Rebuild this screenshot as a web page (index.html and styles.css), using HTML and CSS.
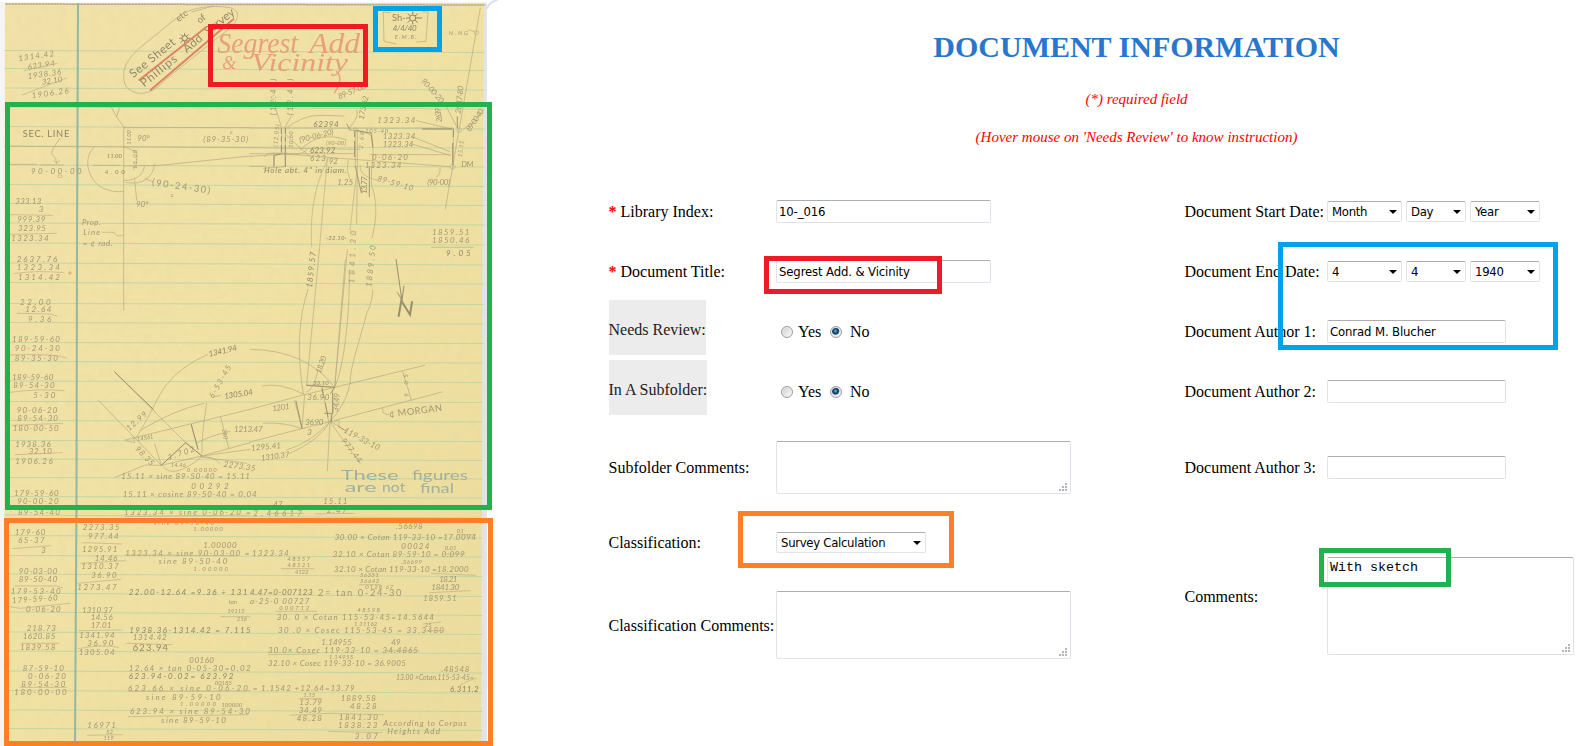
FILE: index.html
```html
<!DOCTYPE html>
<html lang="en">
<head>
<meta charset="utf-8">
<title>Document Information</title>
<link rel="stylesheet" href="styles.css">
</head>
<body>
<main class="page">
<section class="scan">
<svg class="sheet" viewBox="0 0 500 746" width="500" height="746">
<defs>
<linearGradient id="paper" x1="0" y1="0" x2="1" y2="1"><stop offset="0" stop-color="#f2e2a9"/><stop offset=".5" stop-color="#f1e2a4"/><stop offset="1" stop-color="#ecdd9f"/></linearGradient>
<filter id="grain" x="0" y="0" width="1" height="1"><feTurbulence type="fractalNoise" baseFrequency=".12" numOctaves="3" seed="4"/><feColorMatrix values="0 0 0 0 .6  0 0 0 0 .52  0 0 0 0 .25  0 0 0 .16 -.04"/></filter>
</defs>
<path d="M0 2H487V746H0Z" fill="#f5f5f4"/>
<path d="M482 3H487V746H480Z" fill="#e3e4e5"/>
<path d="M487 8Q490 2 497 0" class="edge"/>
<path d="M5 3H484L482 300L481 746H4Z" fill="url(#paper)"/>
<path d="M5 3H484L482 300L481 746H4Z" filter="url(#grain)"/>
<path d="M6 4L484 5" class="perf"/>
<path class="rule" d="M5 50.500L484 52.500M5 68.500L484 70.500M5 88L484 90M5 107L484 109M5 126.500L484 129M5 146L484 148M5 165L484 167M5 184.500L484 186.500M5 203.500L484 205.500M5 223L484 225M5 243L484 245M5 263L483 265M5 282.500L483 284M5 303.500L483 304.500M5 322.500L483 324M5 342.500L483 343.500M5 361.500L482 363M5 381L482 382.500M5 401.500L482 402.500M5 420.500L482 422M5 440.500L482 441.500M5 459L482 460.500M5 477.500L482 479M5 496.500L482 498M5 515L482 518M5 535.500L482 538M5 555.500L482 557M5 574L482 576.500M5 593L482 596.500M5 612L482 615.500M5 632L482 634.500M5 651L482 653.500M5 671L482 673M5 690.500L482 693M5 710L482 711.500M5 728.500L482 730.500"/>
<path class="margin" d="M78 4L77 250L76.500 500L75 746"/>

<g class="hand" transform="scale(.33333)">
<g transform="rotate(-8 110 180)"><text x="56" y="176" textLength="108">1314.42</text><text x="80" y="205" textLength="82">623.94</text><text x="76" y="233" textLength="102">1938.36</text><text x="116" y="256" textLength="62">32.10</text><text x="80" y="292" textLength="112">1906.26</text></g>
<path d="M72 212L172 190M66 285L200 234"/>
<g class="bold" transform="rotate(-39 400 235)"><text x="400" y="235" textLength="166" class="xl">See Sheet</text><text x="658" y="233" class="lg">of</text><text x="408" y="277" textLength="130" class="xl">Phillips</text><text x="572" y="277" textLength="64" class="xl">Add</text><text x="656" y="277" textLength="104" class="xl">Survey</text><text x="612" y="190" class="lg">etc</text></g>
<path class="sun" d="M554 100V107M554 123V130M539 115H546M562 115H570M543 104L549 110M559 120L565 127M565 104L559 110M549 120L543 127"/><circle class="sun" cx="554" cy="115" r="8"/>
<path class="dark" d="M374 250C362 205 384 174 424 140L532 52C575 18 640 16 684 22C730 30 712 65 690 84L495 240C460 280 420 290 390 270Q376 262 374 250M575 36L640 18"/>
<path class="redline" d="M418 240L618 82M452 270L700 58"/>
<text x="68" y="411" textLength="140" class="lg bold">SEC. LINE</text>
<path class="dark" d="M180 415Q146 460 158 466T170 490L162 482M170 490L178 482"/>
<path class="dark" d="M15 439L750 443M30 493H110M120 495H190M280 496H360M372 498L480 496L750 468M371 380V750M334 322Q350 355 371 380M350 350L358 324M371 383H750M282 442C250 470 260 530 300 560Q340 580 370 574M372 440L410 456Q415 490 400 510M372 542Q425 542 434 500M378 548Q455 558 464 492M404 540L410 600M435 536L458 545"/>
<text x="93" y="522" textLength="152">90-00-00</text><path d="M186 526Q172 522 174 530Q178 536 188 531"/>
<text x="320" y="474" textLength="46" class="sm bold">11.00</text><text x="314" y="523" textLength="60" class="sm bold">4.00</text>
<text transform="translate(394 434) rotate(-90)" textLength="44" class="sm">11.00</text><text transform="translate(412 507) rotate(-90)" textLength="58" class="sm">15.00</text>
<text x="412" y="422">90°</text><text x="408" y="620">90°</text>
<text x="455" y="556" textLength="176" transform="rotate(8 455 556)" class="lg">(90-24-30)</text><text x="512" y="590" class="sm">c</text>
<text x="610" y="426" textLength="134">(89-35-30)</text><text x="690" y="402" class="sm">c</text>
<text x="46" y="612" textLength="78">333.13</text><text x="116" y="636">3</text><text x="52" y="666" textLength="84">999.39</text><text x="54" y="692" textLength="84">323.95</text><text x="34" y="723" textLength="112">1323.34</text>
<path d="M30 644L158 646M30 703L170 700"/>
<text x="246" y="674" textLength="56">Prop.</text><text x="250" y="704" textLength="50">Line</text><text x="248" y="738" textLength="90">= ¢ rad.</text><path d="M308 697H342Q346 712 368 706"/>
</g>

<g class="hand" transform="translate(250 0) scale(.33333)">
<g class="script"><text x="-98" y="158" textLength="242" lengthAdjust="spacingAndGlyphs">Segrest</text><text x="178" y="158" textLength="152" lengthAdjust="spacingAndGlyphs">Add</text><text x="-84" y="206" class="amp">&amp;</text><text x="4" y="212" textLength="290" lengthAdjust="spacingAndGlyphs" class="vic">Vicinity</text><path d="M260 215Q282 235 254 278"/></g>
<text x="426" y="62" class="lg bold">Sh-</text><text x="428" y="94" textLength="72" class="bold">4/4/40</text><text x="434" y="116" textLength="66" class="sm">E.M.B.</text>
<path class="dark" d="M420 38L400 36L402 124L438 132M518 36H534L528 124L500 126"/>
<circle class="sun" cx="488" cy="54" r="9"/><path class="sun" d="M488 36V43M488 65V72M470 54H477M499 54H515M474 42L480 47M502 42L496 47M474 67L480 61M502 67L496 61"/><circle cx="679" cy="98" r="6"/>
<text x="596" y="106" textLength="58" class="sm">N.NG</text><path d="M655 90L674 95"/><path class="dark" d="M691 24L608 500L586 628"/>
<text transform="translate(78 346) rotate(-90)" textLength="110">(12.40)</text><text transform="translate(128 346) rotate(-90)" textLength="110">(12.40)</text><path d="M72 286Q60 288 64 296L72 298"/>
<text transform="translate(268 298) rotate(-22)" textLength="88">89-57-00</text><text transform="translate(341 360) rotate(-78)" textLength="72">173.62</text>
<text transform="translate(512 244) rotate(48)" textLength="90">90-00-20</text><text transform="translate(576 366) rotate(-96)" textLength="44">2639</text><text transform="translate(632 342) rotate(-84)" textLength="84">26-17-80</text><text transform="translate(660 396) rotate(-55)" textLength="76">89-00-40</text>
<path class="dark" d="M0 384H610M0 443L330 448M0 461L310 461M0 469L108 462L310 478L600 500M360 464H600M108 385Q160 345 210 346T280 348M518 387H610M296 386Q330 350 320 330M300 390Q350 390 365 410C380 480 350 530 372 580Q386 640 366 714M95 384V460H106V384M106 462V500M72 462V500M316 390V500M322 390V500L320 670M76 322L94 380M124 348L106 380M108 405L180 470M150 450Q210 390 290 420M108 462Q150 470 170 450M43 470Q50 455 92 460M0 499H46M40 505L106 500M570 504Q572 525 560 530M610 388V500M500 362L600 386M486 410L600 455M486 432L600 466M590 322L622 384M700 330Q690 355 640 388"/>
<path class="ink" d="M94 386V400M94 410V424M94 436V456M106 386V400M106 412V424M106 436V460M106 464V500M314 392V410M314 424V470M320 392L364 400L368 440M72 468V498M75 466L92 462M316 500L334 578M358 500V590M518 387H606M610 390V410M608 430V492M300 390L290 372M622 384V350"/>
<g class="bold"><text x="190" y="382" textLength="76">62394</text><text x="180" y="459" textLength="76">623.92</text></g>
<text x="180" y="484" textLength="48">623</text><text x="236" y="492">92</text><text x="382" y="370" textLength="114">1323.34</text><text x="398" y="418" textLength="98">1323.34</text><text x="398" y="442" textLength="92">1323.34</text><text x="344" y="505" textLength="110">1323.34</text><text x="366" y="480" textLength="108">0-06-20</text>
<text transform="translate(150 428) rotate(-14)" textLength="105">(90-06-20)</text><text x="228" y="434" class="sm" textLength="60">(90-00)</text><text x="345" y="398" class="sm" textLength="70">105-40</text>
<text x="42" y="520" textLength="248" class="bold">Hole abt. 4" in diam.</text><text x="262" y="556">1.25</text>
<text transform="translate(350 582) rotate(-88)" textLength="52" class="bold">13.77</text><text transform="translate(380 542) rotate(16)" textLength="112">89-59-10</text>
<text x="532" y="556" textLength="68">(90-00)</text><text x="634" y="500" textLength="36">DM</text>
<text transform="translate(82 440) rotate(-84)" textLength="66" class="sm">(12.05)</text><text transform="translate(128 444) rotate(-90)" textLength="50" class="sm">30.60</text><text transform="translate(338 446) rotate(-84)" textLength="50" class="sm">2.68</text><text transform="translate(636 472) rotate(-84)" textLength="50" class="sm">15.11</text>
<circle cx="106" cy="462" r="5"/><circle cx="316" cy="390" r="6"/><circle cx="608" cy="500" r="7"/><circle cx="628" cy="390" r="7"/>
<path d="M235 475C190 560 180 650 185 740M232 475L208 750M322 500L300 690M295 480Q285 520 308 550M330 495Q326 530 380 540"/>
<text x="228" y="721" textLength="62" class="sm bold">-32.10-</text><text transform="translate(314 850) rotate(-88)" textLength="158">1841.30</text>
<text x="546" y="704" textLength="112">1859.51</text><text x="546" y="730" textLength="112">1850.46</text><path d="M544 742H670"/>
</g>

<g class="hand" transform="translate(0 250) scale(.33333)">
<text x="50" y="36" textLength="122">2637.76</text><text x="50" y="59" textLength="130">1323.34</text><text x="54" y="90" textLength="126">1314.42</text>
<text x="60" y="164" textLength="92">22.00</text><text x="76" y="185" textLength="78">12.64</text><text x="84" y="216" textLength="70">9.36</text>
<text x="36" y="277" textLength="144">189-59-60</text><text x="44" y="304" textLength="136">90-24-30</text><text x="44" y="334" textLength="130">89-35-30</text>
<text x="36" y="391" textLength="124">189-59-60</text><text x="40" y="415" textLength="124">89-54-30</text><text x="100" y="443" textLength="66">5-30</text>
<text x="50" y="488" textLength="122">90-06-20</text><text x="52" y="512" textLength="122">89-54-30</text><text x="38" y="544" textLength="138">180-00-50</text>
<text x="46" y="590" textLength="106">1938.36</text><text x="86" y="612" textLength="70">32.10</text><text x="46" y="642" textLength="112">1906.26</text>
<text x="42" y="738" textLength="134">179-59-60</text><text x="52" y="762" textLength="124">90-00-20</text>
<path d="M42 71Q110 60 190 68M52 190L150 192L172 198M30 315Q180 310 200 325M30 427Q120 415 192 422M36 526L188 520M46 614L186 608"/>
<circle class="stain" cx="210" cy="69" r="5"/>
<path class="dark" d="M371 0V180M344 366L557 578L606 618L750 578M294 450L484 646M376 570L750 478M376 572L404 578L400 560M484 646L557 578M484 646L606 618L750 598M410 560C450 500 470 440 500 404Q540 350 622 314M420 542Q520 480 612 460M606 610Q604 560 620 460M574 524L594 598M464 582L484 646L436 645L345 682M662 502L686 594M610 620Q640 620 660 640M490 650Q520 690 606 620M600 620L740 640M590 580Q620 560 690 544M640 440Q650 440 662 436"/>
<path class="ink" d="M344 366L460 478M484 646L557 578L606 618M574 524L594 598"/>
<text transform="translate(628 320) rotate(-13)" textLength="86" class="bold">1341.94</text><text transform="translate(640 446) rotate(-60)" textLength="110">6-53-45</text><text x="674" y="447" textLength="86" transform="rotate(-9 674 447)" class="bold">1305.04</text><text x="702" y="546" textLength="86">1213.47</text><text transform="translate(388 544) rotate(-42)" textLength="74">12.99</text><text transform="translate(404 598) rotate(46)" textLength="70">98.35</text><text transform="translate(412 574) rotate(-10)" textLength="50" class="sm">14561</text><text transform="translate(506 630) rotate(-18)" textLength="84">1.702</text><text x="512" y="652" class="sm">14.46</text><text x="560" y="666" textLength="90" class="sm">0.00000</text><text x="670" y="650" transform="rotate(8 670 650)" textLength="96">2273.35</text><text transform="translate(666 538) rotate(80)" class="sm">280</text>
<text x="364" y="688" textLength="386">15.11 × sine 89-50-40 = 15.11</text><text x="574" y="718" textLength="112">00292</text><text x="368" y="742" textLength="402">15.11 × cosine 89-50-40 = 0.04</text>
</g>

<g class="hand" transform="translate(250 250) scale(.33333)">
<path class="dark" d="M208 0L170 405L254 412L286 30M174 118Q130 250 160 432M298 60C300 200 280 360 254 412M368 120Q370 150 350 190C330 270 300 350 300 400Q290 460 240 515M292 0L254 412M0 478L164 434L524 346M0 576L156 536L240 515L576 426M0 298Q170 300 254 412M36 408Q90 396 164 434L156 536L134 452M40 520Q100 515 156 536M248 420V490L240 515L232 662M216 412L236 515M240 515L330 640M240 515L270 530M110 600Q180 580 240 515M120 610Q210 570 240 515M458 364L484 450M398 474Q395 495 415 494M170 426Q190 420 204 362M256 516Q262 506 268 514L266 526"/>
<path class="ink" d="M170 406L254 412L242 430M216 416L222 444M226 460L234 500M248 430V490M138 454L156 534M224 490H244V515M266 530L290 544"/>
<path class="arrow" d="M438 28L456 152M442 128L456 150L462 108"/><path class="north" d="M446 198L454 152L480 194L486 156"/>
<g class="bold"><text transform="translate(186 114) rotate(-84)" textLength="108">1859.57</text></g><text transform="translate(364 112) rotate(-84)" textLength="126">1889.50</text>
<text transform="translate(212 372) rotate(-70)" textLength="54">18.20</text><text x="190" y="406" class="sm bold">33.10</text><text x="172" y="450" textLength="66">36.90</text><text x="166" y="526" textLength="54">36.90</text><text x="172" y="556">3</text><text transform="translate(264 486) rotate(-84)" textLength="56">34.49</text><text x="68" y="484" textLength="52" transform="rotate(-8 68 484)">1201</text>
<text x="4" y="602" textLength="90" transform="rotate(-5 4 602)">1295.41</text><text x="34" y="632" textLength="86" transform="rotate(-7 34 632)">1310.37</text><text transform="translate(280 546) rotate(28)" textLength="118">119-33-10</text><text transform="translate(272 572) rotate(52)" textLength="86">977.44</text><text transform="translate(476 440) rotate(-92)" textLength="68" class="sm">9.05</text>
<text x="418" y="502" textLength="160" transform="rotate(-7 418 500)" class="lg">¢ MORGAN</text>
<text x="588" y="18" textLength="74" class="bold">9.05</text>
<g class="blue"><text x="272" y="690" textLength="174" lengthAdjust="spacingAndGlyphs">These</text><text x="486" y="690" textLength="168" lengthAdjust="spacingAndGlyphs">figures</text><text x="284" y="726" textLength="96" lengthAdjust="spacingAndGlyphs">are</text><text x="396" y="726" textLength="70" lengthAdjust="spacingAndGlyphs">not</text><text x="510" y="728" textLength="102" lengthAdjust="spacingAndGlyphs">final</text></g>
<text x="220" y="762" textLength="72">15.11</text>
</g>

<g class="hand" transform="translate(0 500) scale(.33333)">
<text x="54" y="46" textLength="126">89-54-40</text><text x="372" y="46" textLength="380">1323.34 × sine 0-06-20 =</text><text x="462" y="76" textLength="180" class="sm">sine 89-50-40</text>
<text x="44" y="105" textLength="92">179-60</text><text x="54" y="130" textLength="80">65-37</text><text x="124" y="160">3</text>
<text x="56" y="222" textLength="116">90-03-00</text><text x="56" y="246" textLength="116">89-50-40</text><text x="32" y="283" textLength="150">179-53-40</text><text x="36" y="310" textLength="138" transform="rotate(-4 36 310)">179-59-60</text><text x="78" y="336" textLength="104">0-06-20</text>
<text x="80" y="393" textLength="88">218.73</text><text x="68" y="416" textLength="98">1620.85</text><text x="60" y="451" textLength="106">1839.58</text>
<text x="68" y="512" textLength="124">87-59-10</text><text x="84" y="536" textLength="114">0-06-20</text><text x="64" y="560" textLength="132">89-54-30</text><text x="42" y="585" textLength="158">180-00-00</text>
<path d="M38 146L152 137M44 258H170L188 264M30 320L60 325L210 310M62 430H176M60 562H200"/>
<text x="248" y="91" textLength="110">2273.35</text><text x="264" y="116" textLength="92">977.44</text><text x="246" y="156" textLength="106">1295.91</text><text x="284" y="182" textLength="68">14.46</text><text x="244" y="208" textLength="112">1310.37</text><text x="274" y="234" textLength="76">36.90</text><text x="232" y="270" textLength="118">1273.47</text>
<text x="246" y="338" textLength="92">1310.37</text><text x="272" y="361" textLength="66">14.56</text><text x="272" y="383" textLength="62">17.01</text><text x="238" y="415" textLength="106">1341.94</text><text x="262" y="438" textLength="78">36.90</text><text x="236" y="466" textLength="108">1305.04</text>
<text x="262" y="684" textLength="86">16971</text><text x="318" y="703" class="sm">52</text><text x="310" y="721" class="sm">119</text>
<path d="M248 128L366 132M242 190L376 182M234 250L362 238M236 392L366 390M234 446Q310 432 356 442M262 706L366 704"/>
<text x="580" y="94" textLength="88" class="sm">1.00000</text><text x="610" y="145" textLength="100">1.00000</text><text x="376" y="169" textLength="372">1323.34 × sine 90-03-00 =</text><text x="476" y="193" textLength="206">sine 89-50-40</text><text x="580" y="214" textLength="104" class="sm">1.00000</text>
<text x="386" y="284" textLength="356" class="bold">22.00-12.64 =9.36 ÷ 131</text><text x="686" y="311" class="sm">tan</text><text x="682" y="338" class="sm">19115</text><text x="710" y="364" class="sm">216</text>
<text x="388" y="398" textLength="364" class="bold">1938.36-1314.42 = 7.115</text><text x="398" y="420" textLength="102">1314.42</text><text x="398" y="452" textLength="106" class="bold lg">623.94</text>
<text x="568" y="490" textLength="74">00160</text><text x="386" y="514" textLength="366">12.64 × tan 0-05-30=0.02</text><text x="386" y="538" textLength="314" class="bold">623.94-0.02= 623.92</text><text x="384" y="573" textLength="360">623.66 × sine 0-06-20</text><text x="438" y="599" textLength="224">sine 89-59-10</text><text x="540" y="618" textLength="108" class="sm">1.00000</text><text x="390" y="643" textLength="360">623.94 × sine 89-54-30</text><text x="484" y="670" textLength="194">sine 89-59-10</text><text x="644" y="555" class="sm">00185</text><text x="664" y="622" class="sm">100000</text>
<path d="M374 50L750 45M376 165L710 167M380 430L516 434M386 574L750 572M384 650L744 644M664 350H750"/>
</g>

<g class="hand" transform="translate(250 500) scale(.33333)">
<text x="10" y="48" textLength="146">2.46617</text><text x="70" y="20">47</text><text x="230" y="38" textLength="60">2.47</text><path d="M60 40H160M196 42L314 40"/>
<text x="438" y="87" textLength="80">.56698</text><text x="254" y="120" textLength="424">30.00 × Cotan 119-33-10 =17.0094</text><text x="454" y="148" textLength="84">00024</text><text x="248" y="171" textLength="396">32.10 × Cotan 89-59-10 = 0.099</text><text x="584" y="150" class="sm">0.01</text><text x="452" y="193" textLength="64" class="sm">.56699</text><text x="252" y="215" textLength="404">32.10 × Cotan 119-33-10  =18.2000</text><text x="568" y="247" textLength="54">18.21</text><text x="544" y="271" textLength="84">1841.30</text><text x="520" y="304" textLength="100">1859.51</text><text x="620" y="98" class="sm">01</text>
<path d="M624 104H678M582 162H644M544 220L676 226M540 278L660 272"/>
<text x="6" y="169" textLength="110">1323.34</text><g class="sm"><text x="112" y="182" textLength="68">48557</text><text x="112" y="202" textLength="68">48521</text><text x="134" y="222">4122</text><text x="330" y="230" textLength="56">56331</text><text x="330" y="248" textLength="58">56643</text><text x="346" y="267" textLength="84">0128 67</text></g><path d="M94 206H192M328 254H390"/>
<text x="0" y="286" textLength="188" class="bold">4.47=0-007123</text><text x="204" y="289" textLength="250" class="lg">2= tan 0-24-30</text><text x="0" y="313" textLength="178">a-25-0  00727</text><text x="88" y="331" textLength="90" class="sm">000712</text><path d="M78 334H200"/>
<text x="322" y="337" textLength="68" class="sm">48598</text><text x="80" y="360" textLength="472">30. 0 × Cotan 115-53-45=14.5644</text><text x="312" y="377" textLength="70" class="sm">1.11162</text><text x="84" y="399" textLength="498">30 .0 × Cosec 115-53-45 = 33.3480</text><text x="524" y="380" class="sm">25</text><path d="M524 392H582M520 372L572 366"/>
<text x="214" y="436" textLength="92">1.14955</text><text x="424" y="434">49</text><text x="54" y="460" textLength="450">30.0× Cosec 119-33-10 = 34.4865</text><text x="236" y="477" class="sm" textLength="74">1.14955</text><text x="54" y="497" textLength="414">32.10 × Cosec 119-33-10 = 36.9005</text><path d="M54 464L200 462M410 452H506"/>
<text x="574" y="515" textLength="84">.48548</text><text x="438" y="540" textLength="234" lengthAdjust="spacingAndGlyphs">13.00 ×Cotan.115-53-45=</text><text x="600" y="576" textLength="86" class="bold">6.311.2</text><path d="M678 535Q640 545 625 562"/>
<text x="8" y="572" textLength="306">= 1.1542 +12.64=13.79</text><text x="160" y="592" class="sm">1.15</text><text x="148" y="614" textLength="68">13.79</text><text x="146" y="638" textLength="70">34.49</text><text x="140" y="662" textLength="76">48.28</text><text x="272" y="604" textLength="106">1889.58</text><text x="300" y="628" textLength="80">48.28</text><text x="266" y="660" textLength="118">1841.30</text><text x="264" y="685" textLength="118">1838.23</text><text x="400" y="679" textLength="250">According to Corpus</text><text x="412" y="702" textLength="158">Heights Add</text><text x="314" y="718" textLength="70">3.07</text>
<path d="M148 596H216M120 646L236 640M238 640L402 644M236 694L396 698"/>
</g>
</svg>
</section>

<section class="form">
<header class="heading">
<h1 class="title">DOCUMENT INFORMATION</h1>
<p class="note note-required">(*) required field</p>
<p class="note note-hover">(Hover mouse on 'Needs Review' to know instruction)</p>
</header>
<div class="columns">
<div class="fields fields-left">
<label><span class="star">*</span> Library Index:</label><div><input class="box" value="10-_016"></div>
<label><span class="star">*</span> Document Title:</label><div><input class="box" value="Segrest Add. &amp; Vicinity"></div>
<label class="shaded">Needs Review:</label><div class="radios"><i class="radio"></i><span class="yes">Yes</span><i class="radio on"></i><span>No</span></div>
<label class="shaded">In A Subfolder:</label><div class="radios"><i class="radio"></i><span class="yes">Yes</span><i class="radio on"></i><span>No</span></div>
<label>Subfolder Comments:</label><div class="area area-short"><svg class="grip" viewBox="0 0 8 8"><path d="M6 0h2v2h-2zM3 3h2v2h-2zM6 3h2v2h-2zM0 6h2v2h-2zM3 6h2v2h-2zM6 6h2v2h-2z"/></svg></div>
<label>Classification:</label><div class="select select-class">Survey Calculation</div>
<label class="lower">Classification Comments:</label><div class="area area-mid"><svg class="grip" viewBox="0 0 8 8"><path d="M6 0h2v2h-2zM3 3h2v2h-2zM6 3h2v2h-2zM0 6h2v2h-2zM3 6h2v2h-2zM6 6h2v2h-2z"/></svg></div>
</div>
<div class="fields fields-right">
<label>Document Start Date:</label><div class="dates"><div class="select">Month</div><div class="select">Day</div><div class="select">Year</div></div>
<label>Document End Date:</label><div class="dates"><div class="select">4</div><div class="select">4</div><div class="select">1940</div></div>
<label>Document Author 1:</label><div><input class="box" value="Conrad M. Blucher"></div>
<label>Document Author 2:</label><div><input class="box"></div>
<label>Document Author 3:</label><div><input class="box"></div>
<label>Comments:</label><div class="area area-tall">With sketch<svg class="grip" viewBox="0 0 8 8"><path d="M6 0h2v2h-2zM3 3h2v2h-2zM6 3h2v2h-2zM0 6h2v2h-2zM3 6h2v2h-2zM6 6h2v2h-2z"/></svg></div>
</div>
</div>
</section>
<div class="mark red mark-heading"></div>
<div class="mark blue mark-date"></div>
<div class="mark green mark-sketch"></div>
<div class="mark orange mark-figures"></div>
<div class="mark red mark-title"></div>
<div class="mark blue mark-author"></div>
<div class="mark orange mark-class"></div>
<div class="mark green mark-comments"></div>
</main>
</body>
</html>
```
FILE: styles.css
```css
* { box-sizing: border-box; }
body { margin: 0; background: #fff; color: #000; font: 16px/18px "Liberation Serif", serif; }
.page { position: relative; display: flex; width: 1577px; height: 746px; overflow: hidden; }
.scan { flex: 0 0 500px; }
.sheet { display: block; }
.sheet path { stroke-linecap: round; }
.edge { fill: none; stroke: #dde3ec; stroke-width: 2; }
.perf { stroke: #b9ab80; stroke-width: 1.5; stroke-dasharray: 1.500 1.500; }
.rule { fill: none; stroke: #c3d4a6; stroke-width: 1; }
.margin { fill: none; stroke: #94b7a0; stroke-width: 2; }
.hand { font-family: Lato, sans-serif; font-style: italic; font-size: 24px; fill: #9a9070; opacity: .9; }
.hand path, .hand circle { fill: none; stroke: #b5aa80; stroke-width: 2; }
.hand .dark { stroke: #b3a880; stroke-width: 2.2; }
.hand .ink { stroke: #8b8265; stroke-width: 2.6; }
.hand .sun { stroke: #827a5f; stroke-width: 3; }
.hand .stain { fill: #dfb070; stroke: none; }
.hand .bold { fill: #857c60; }
.hand .lg { font-size: 28px; font-style: normal; }
.hand .xl { font-size: 35px; font-style: normal; }
.hand .sm, .hand .sm text { font-size: 18px; }
.hand .redline { stroke: #dc7b5d; stroke-width: 6; }
.hand .arrow { stroke: #8f8768; stroke-width: 3; }
.hand .north { stroke: #8f8768; stroke-width: 6; }
.hand .script { font-family: "Liberation Serif", serif; font-size: 88px; fill: #e69a75; }
.hand .script .amp { font-size: 56px; }
.hand .script .vic { font-size: 76px; }
.hand .script path { stroke: #e8a17c; stroke-width: 5; }
.hand .blue { font-size: 38px; font-style: normal; fill: #97ad9f; }

.form { flex: 1; display: flex; flex-direction: column; }
.heading { height: 182px; padding: 29px 0 0 0; margin-left: 196px; text-align: center; }
.title { margin: 0; font-size: 30px; line-height: 36px; color: #2877cc; }
.note { margin: 0; font-style: italic; font-size: 15px; line-height: 18px; color: #f00; }
.note-required { padding-top: 25px; }
.note-hover { padding-top: 20px; }
.columns { display: flex; padding-left: 109px; }
.fields { display: grid; align-items: center; align-content: start; white-space: nowrap; }
.fields-left { width: 576px; grid-template-columns: 167px 300px; grid-template-rows: 60px 60px 60px 60px 91px 60px 104px; }
.fields-right { grid-template-columns: 142px 247px; grid-template-rows: 60px 60px 60px 60px 91px 168px; }
.fields label { text-indent: -.5px; }
.star { color: #f00; font-weight: bold; }
.shaded { justify-self: start; height: 55px; padding-top: 21px; margin-bottom: 9px; background: #ececec; color: #222; }
.lower { padding-top: 2px; }
.box, .select, .area { display: block; border: 1px solid #e0e3e9; border-top-color: #abadb3; border-radius: 2px; background: #fff; font: 13px/18px "DejaVu Sans Condensed", sans-serif; color: #000; }
.box { width: 179px; height: 23px; margin-bottom: 1px; padding: 1px 2px; letter-spacing: -.13px; outline: none; }
.fields-left .box { width: 215px; }
.select { position: relative; height: 21px; margin-bottom: 1px; padding: 1px 4px; letter-spacing: -.3px; }
.select::after { content: ""; position: absolute; right: 4px; top: 8px; border: 4px solid transparent; border-top-color: #000; border-bottom: 0; }
.select-class { width: 150px; }
.dates { display: grid; grid-template-columns: 75px 60px 70px; gap: 4px; }
.area { position: relative; width: 295px; font: 13.33px/17px "Liberation Mono", monospace; }
.area-short { height: 53px; }
.area-mid { height: 68px; }
.area-tall { width: 247px; height: 98px; margin-top: 18px; padding: 1px 2px; }
.grip { position: absolute; right: 3px; bottom: 2px; width: 8px; height: 8px; fill: #b4b4b4; }
.radios { display: flex; align-items: center; padding-left: 5px; }
.radio { width: 12px; height: 12px; margin-bottom: 1px; border: 1px solid #9c9c9c; border-radius: 50%; background: linear-gradient(135deg, #ccc, #fff); box-shadow: inset 0 0 0 1px #eee; }
.radio.on { background: radial-gradient(circle at 45% 40%, #63c4e8 0, #174d77 25%, #123c60 38%, #eee 52%); margin-right: 8px; }
.yes { width: 37px; padding-left: 5px; }
.mark { position: absolute; border: 5px solid; }
.mark.red { border-color: #ed1c24; }
.mark.blue { border-color: #00a2e8; }
.mark.green { border-color: #22b14c; }
.mark.orange { border-color: #ff7f27; }
.mark-heading { left: 208px; top: 24px; width: 160px; height: 63px; }
.mark-date { left: 373px; top: 6px; width: 69px; height: 46px; }
.mark-sketch { left: 5px; top: 102px; width: 487px; height: 408px; }
.mark-figures { left: 4px; top: 518px; width: 489px; height: 228px; }
.mark-title { left: 764px; top: 256px; width: 178px; height: 38px; }
.mark-author { left: 1278px; top: 242px; width: 280px; height: 108px; }
.mark-class { left: 738px; top: 511px; width: 216px; height: 57px; }
.mark-comments { left: 1319px; top: 548px; width: 132px; height: 39px; }
```
